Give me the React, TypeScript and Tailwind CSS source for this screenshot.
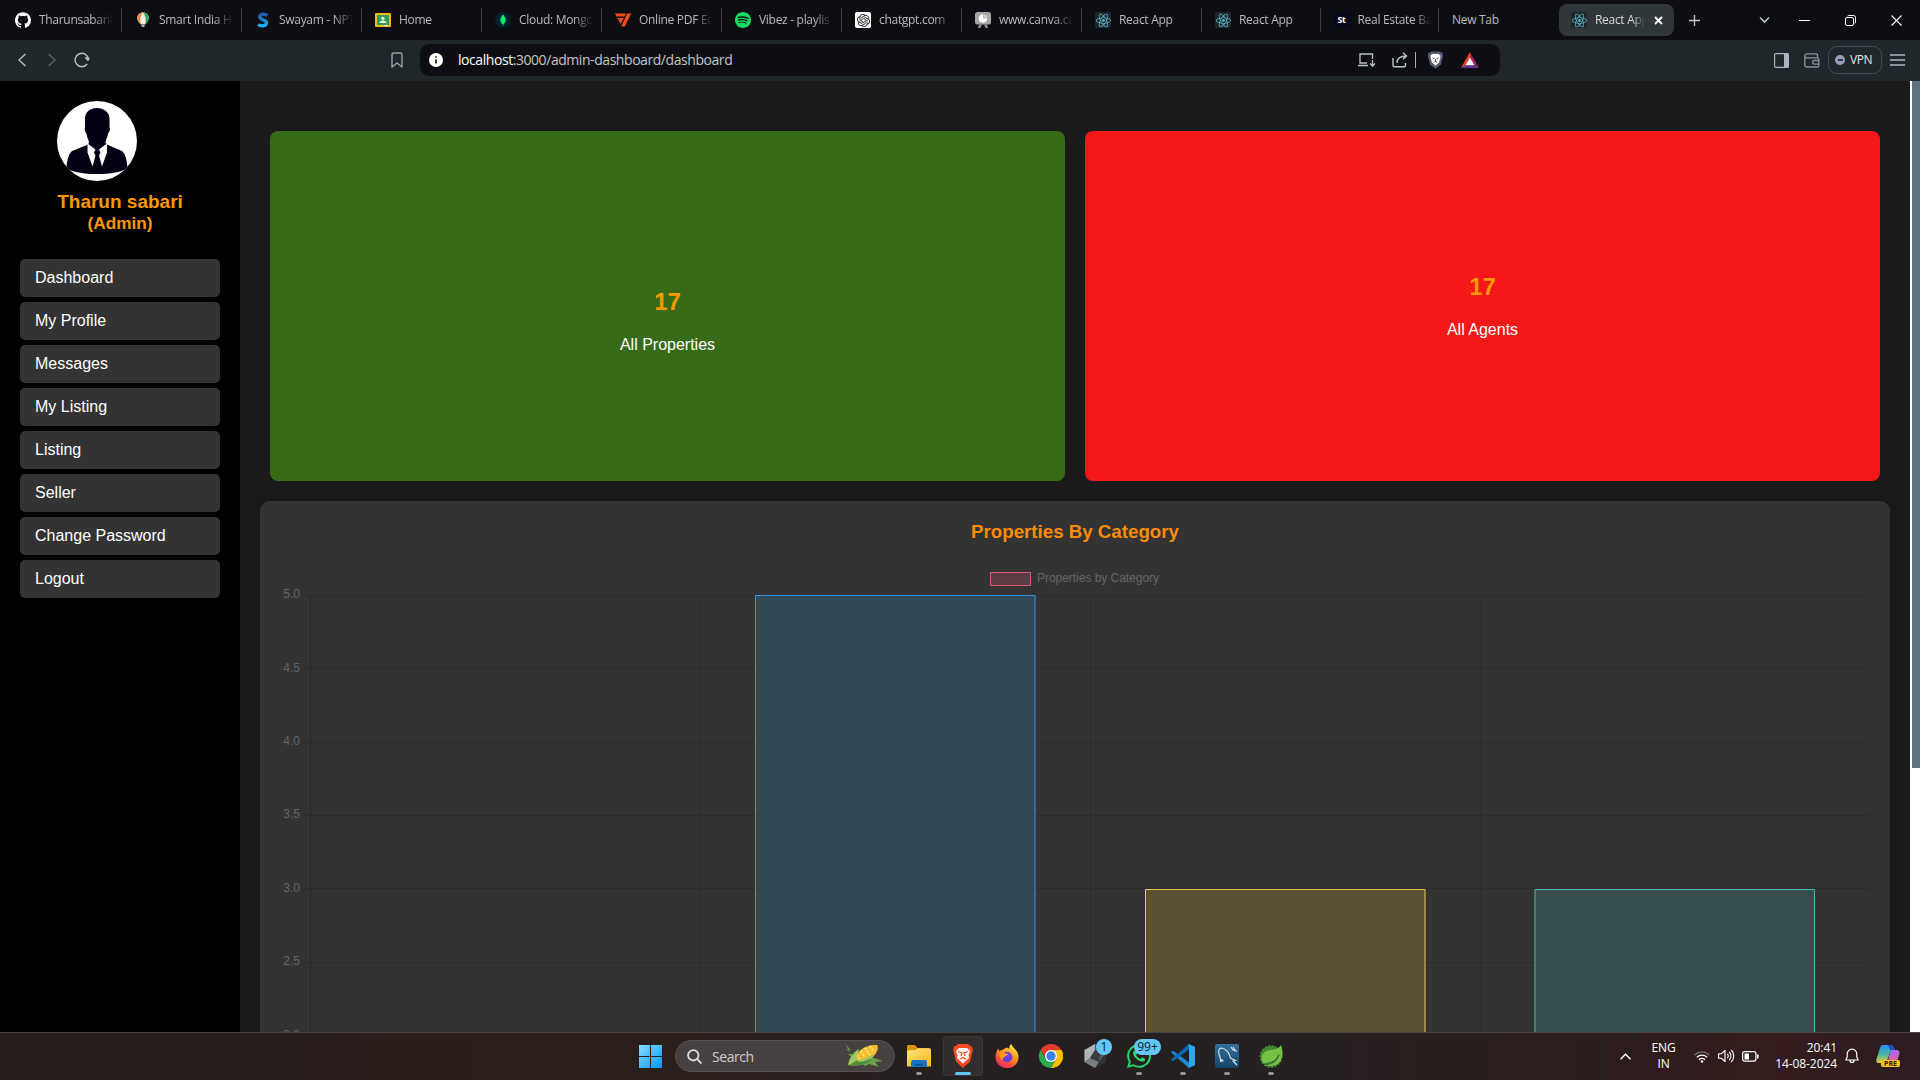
import React from 'react';
import { SiReact, SiGithub, SiSpotify, SiWhatsapp, SiOpenai } from 'react-icons/si';

const ui = "font-['Open_Sans',sans-serif]";

function ReactIcon() {
  return (
    <span className="flex size-4 items-center justify-center rounded-[2px] bg-[#23272b] text-[#53b9d1]">
      <SiReact size={15} />
    </span>
  );
}

function BalloonIcon() {
  return (
    <svg width="16" height="16" viewBox="0 0 16 16">
      <path d="M8 .5C4.500.5 2.200 3 2.200 6c0 2.600 2 4.800 3.800 6.500h4c1.800-1.700 3.800-3.900 3.800-6.500 0-3-2.300-5.500-5.800-5.500z" fill="#f4efe6" />
      <path d="M8 .5C4.500.5 2.200 3 2.200 6c0 2.600 2 4.800 3.800 6.500C4.800 9 5 3.500 8 .5z" fill="#f08a4b" />
      <path d="M8 .5c3.500 0 5.800 2.500 5.800 5.500 0 2.600-2 4.800-3.800 6.500C11.200 9 11 3.500 8 .5z" fill="#3fa45b" />
      <path d="M6.500 13h3v2h-3z" fill="#b9b09c" />
    </svg>
  );
}

function SwayamIcon() {
  return (
    <svg width="16" height="16" viewBox="0 0 16 16">
      <defs>
        <linearGradient id="sw" x1="0" y1="0" x2="0" y2="1">
          <stop offset="0" stopColor="#2458a8" />
          <stop offset="1" stopColor="#18b2f2" />
        </linearGradient>
      </defs>
      <path d="M12.300 3.600C11 2 5 1.200 4.800 4.900c-.1 3.400 7 2.400 6.700 6-.4 4-6.600 3.300-8.200 1.300" fill="none" stroke="url(#sw)" strokeWidth="3.400" />
    </svg>
  );
}

function ClassroomIcon() {
  return (
    <svg width="16" height="16" viewBox="0 0 16 16">
      <rect y="1" width="16" height="14" rx="1" fill="#f5ba15" />
      <rect x="2" y="3" width="12" height="10" fill="#2f9e58" />
      <circle cx="8" cy="6.300" r="1.600" fill="#fff" />
      <path d="M4.500 11c0-3.400 7-3.400 7 0z" fill="#fff" />
      <path d="M9 13h4v1H9z" fill="#fff3c4" />
    </svg>
  );
}

function MongoIcon() {
  return (
    <svg width="16" height="16" viewBox="0 0 16 16">
      <circle cx="8" cy="8" r="8" fill="#04202b" />
      <path d="M8 2.200c.5 1.400 2.700 2.700 2.700 5.800 0 2.500-1.600 3.600-2.300 4.300L8.200 14h-.4l-.2-1.700C6.900 11.600 5.300 10.500 5.300 8 5.300 4.900 7.500 3.600 8 2.200z" fill="#00ed64" />
    </svg>
  );
}

function PdfIcon() {
  return (
    <svg width="16" height="16" viewBox="0 0 16 16" fill="#f0501e">
      <path d="M0 1.500h11L9.600 4.400H1.600zM2.300 6h6.500l-3 6zM12.200 1.500H16L9.900 14.500H6.200z" />
    </svg>
  );
}

function CanvaIcon() {
  return (
    <svg width="16" height="16" viewBox="0 0 16 16">
      <rect x="0" y="0" width="16" height="12.500" rx="2.500" fill="#a5a5a5" />
      <path d="M4 12.500h3L5.500 16H3zM9 12.500h3L13 16h-2.500z" fill="#8f8f8f" />
      <circle cx="8" cy="6.500" r="4.300" fill="#fff" />
      <path d="M8.500 2v4H13A4.600 4.600 0 0 0 8.500 2z" fill="#cfcfcf" stroke="#a5a5a5" strokeWidth=".6" />
    </svg>
  );
}

function StIcon() {
  return (
    <span className="flex size-4 items-center justify-center rounded-[3px] bg-[#04091d] text-[9px] font-bold tracking-[-0.500px] text-white">
      St
    </span>
  );
}

const tabs: { title: string; icon: React.ReactNode }[] = [
  { title: 'Tharunsabari8', icon: <SiGithub size={16} className="text-white" /> },
  { title: 'Smart India H', icon: <BalloonIcon /> },
  { title: 'Swayam - NPT', icon: <SwayamIcon /> },
  { title: 'Home', icon: <ClassroomIcon /> },
  { title: 'Cloud: Mongo', icon: <MongoIcon /> },
  { title: 'Online PDF Ed', icon: <PdfIcon /> },
  { title: 'Vibez - playlis', icon: <SiSpotify size={16} className="text-[#1ed760]" /> },
  {
    title: 'chatgpt.com',
    icon: (
      <span className="flex size-4 items-center justify-center rounded-[2px] bg-white text-[#222]">
        <SiOpenai size={13} />
      </span>
    ),
  },
  { title: 'www.canva.co', icon: <CanvaIcon /> },
  { title: 'React App', icon: <ReactIcon /> },
  { title: 'React App', icon: <ReactIcon /> },
  { title: 'Real Estate Ba', icon: <StIcon /> },
];

const fade = '[mask-image:linear-gradient(to_right,black_74%,transparent_100%)]';

function TabStrip() {
  return (
    <div className="flex h-10 shrink-0 items-center bg-[#0d0e13] text-[12px] tracking-[-0.300px] text-[#b9babd]">
      <div className="flex w-[1439px] shrink-0 pl-[2px]">
        {tabs.map((t, i) => (
          <div key={i} className={`flex h-6 shrink-0 items-center border-r border-[#3b3c40] ${i > 9 ? 'w-[118.500px]' : 'w-[120px]'}`}>
            <span className="ml-[13px] size-4 shrink-0">{t.icon}</span>
            <span className={`ml-2 w-[74px] shrink-0 whitespace-nowrap ${fade}`}>{t.title}</span>
          </div>
        ))}
      </div>
      <div className="w-[120px] shrink-0 pl-[13px]">New Tab</div>
      <div className="flex h-8 w-[115px] shrink-0 items-center rounded-lg bg-[#2f373b] pl-3 text-[#d8dadc]">
        <ReactIcon />
        <span className={`ml-2 w-[50px] shrink-0 whitespace-nowrap ${fade}`}>React App</span>
        <svg className="ml-[9px]" width="9" height="9" viewBox="0 0 9 9" stroke="#fff" strokeWidth="1.800">
          <path d="M1 1l7 7M8 1L1 8" />
        </svg>
      </div>
      <svg className="ml-[15px]" width="11" height="11" viewBox="0 0 11 11" stroke="#c6c8ca" strokeWidth="1.300">
        <path d="M5.500 0v11M0 5.500h11" />
      </svg>
      <svg className="ml-[59px]" width="11" height="8" viewBox="0 0 11 8" fill="none" stroke="#b7c4cc" strokeWidth="1.600">
        <path d="M1 1.500l4.500 4.500L10 1.500" />
      </svg>
      <svg className="ml-[29px]" width="11" height="11" viewBox="0 0 11 11" stroke="#fff">
        <path d="M0 5.500h11" />
      </svg>
      <svg className="ml-[35px]" width="11" height="11" viewBox="0 0 11 11" fill="none" stroke="#fff">
        <rect x=".5" y="2.500" width="8" height="8" rx="1.500" />
        <path d="M2.500 1C3 .6 3.500.5 4 .5h4.500a2 2 0 0 1 2 2V7c0 .6-.1 1-.5 1.500" />
      </svg>
      <svg className="ml-[35px]" width="11" height="11" viewBox="0 0 11 11" stroke="#fff" strokeWidth="1.100">
        <path d="M.5.5l10 10M10.500.5l-10 10" />
      </svg>
    </div>
  );
}

function Toolbar() {
  return (
    <div className="flex h-[41px] shrink-0 items-center bg-[#20272b] pb-px">
      <svg className="ml-[17px]" width="10" height="14" viewBox="0 0 10 14" fill="none" stroke="#b3bdc4" strokeWidth="1.400">
        <path d="M8.500 1L2 7l6.500 6" />
      </svg>
      <svg className="ml-[20px]" width="10" height="14" viewBox="0 0 10 14" fill="none" stroke="#5b656b" strokeWidth="1.400">
        <path d="M1.500 1L8 7l-6.500 6" />
      </svg>
      <svg className="ml-[17px]" width="16" height="16" viewBox="0 0 16 16" fill="none" stroke="#b3bdc4" strokeWidth="1.400">
        <path d="M13.200 12A6.700 6.700 0 1 1 14.500 7.500" />
        <path d="M10.300 5.300h5v2.400l-1.500 1.500z" fill="#b3bdc4" stroke="none" />
      </svg>
      <svg className="ml-[301px]" width="12" height="16" viewBox="0 0 12 16" fill="none" stroke="#97a3ab" strokeWidth="1.400">
        <path d="M1 2.500C1 1.500 1.500 1 2.500 1h7c1 0 1.500.5 1.500 1.500V15l-5-4-5 4z" strokeLinejoin="round" />
      </svg>
      <div className="ml-[17px] flex h-8 w-[1080px] shrink-0 items-center rounded-[9px] bg-[#0d0e13]">
        <svg className="ml-[9px]" width="14" height="14" viewBox="0 0 14 14">
          <circle cx="7" cy="7" r="7" fill="#fff" />
          <path d="M7 6.200v4.300M7 3.300v1.500" stroke="#0d0e13" strokeWidth="1.600" />
        </svg>
        <div className="ml-[15px] w-[900px] text-[14px] leading-[18px] tracking-[-0.440px] text-[#c3c5c8]">
          <span className="text-white">localhost</span>:3000/admin-dashboard/dashboard
        </div>
        <svg width="17" height="14" viewBox="0 0 17 14" fill="none" stroke="#bfc3c7" strokeWidth="1.300">
          <path d="M14.500 6V1H2v9h7M0 12.500h10" />
          <path d="M14.500 7v6M12 10.500l2.500 2.500 2.500-2.500" />
        </svg>
        <svg className="ml-[17px]" width="16" height="16" viewBox="0 0 16 16" fill="none" stroke="#bfc3c7" strokeWidth="1.400">
          <path d="M1 6v7.500c0 .8.500 1.300 1.300 1.300h9.900c.8 0 1.300-.5 1.300-1.300V11" />
          <path d="M5 11c0-4.500 2.500-7 9.500-7M11 .8l3.500 3.200L11 7.300" />
        </svg>
        <div className="ml-[7px] h-4 w-px bg-[#a9adb1]" />
        <svg className="ml-[11px]" width="17" height="18" viewBox="0 0 17 18">
          <path d="M4 .5h9l1 1 1.500.3.5 3.200-2 8.500-5.500 4.300L3 13.500 1 5l.5-3.200L3 1.500z" fill="#5a5c73" />
          <path d="M5.500 3h6l2 1.500-.3 3-1.200 4-3.500 3-3.500-3-1.200-4-.3-3z" fill="#fff" />
          <path d="M5.500 7l2 .7M11.500 7l-2 .7M8.500 8v2.500M6.800 11l1.700-.6 1.700.6" fill="none" stroke="#4a4c60" strokeWidth="1" />
        </svg>
        <svg className="ml-[17px]" width="18" height="16" viewBox="0 0 18 16">
          <path d="M9 0L0 16l4.500-2.800L9 5.500z" fill="#ff4724" />
          <path d="M9 0l9 16-4.500-2.800L9 5.500z" fill="#9e1f63" />
          <path d="M0 16h18l-4.500-2.800h-9z" fill="#662d91" />
          <path d="M9 5.500l4.500 7.700h-9z" fill="#fff" />
        </svg>
      </div>
      <svg className="ml-[274px]" width="15" height="15" viewBox="0 0 15 15" fill="none" stroke="#a9b6bf" strokeWidth="1.200">
        <rect x=".6" y=".6" width="13.800" height="13.800" rx="1" />
        <path d="M10 1h4.500v13.500H10z" fill="#a9b6bf" stroke="none" />
      </svg>
      <svg className="ml-[15px]" width="16" height="15" viewBox="0 0 16 15" fill="none" stroke="#87939b" strokeWidth="1.300">
        <path d="M13.500 4V2.200c0-.8-.5-1.300-1.300-1.300H2.800a2 2 0 0 0 0 4h10.700c.8 0 1.300.5 1.300 1.300v6.200c0 1-.6 1.600-1.600 1.600H3a2.200 2.200 0 0 1-2.200-2.200V3" />
        <path d="M15 7.500h-4.500a1.700 1.700 0 0 0 0 3.600H15" />
      </svg>
      <div className="ml-2 flex h-[28px] w-[54px] shrink-0 items-center rounded-[9px] border border-[#414b51] pl-[6px] text-[12px] font-medium tracking-[-0.400px] text-[#e6e8ea]">
        <span className="mr-[5px] flex size-[10px] shrink-0 items-center justify-center rounded-full bg-[#9b9db5]">
          <span className="h-[2px] w-[5px] bg-[#31384a]" />
        </span>
        VPN
      </div>
      <svg className="ml-[8px]" width="15" height="12" viewBox="0 0 15 12" stroke="#a9b6bf" strokeWidth="1.300">
        <path d="M0 1h15M0 6h15M0 11h15" />
      </svg>
    </div>
  );
}

const menu = ['Dashboard', 'My Profile', 'Messages', 'My Listing', 'Listing', 'Seller', 'Change Password', 'Logout'];

function Sidebar() {
  return (
    <aside className="w-60 shrink-0 bg-black px-5 pt-5">
      <svg className="ml-[37px] block" width="80" height="80" viewBox="0 0 80 80">
        <clipPath id="av">
          <circle cx="40" cy="40" r="40" />
        </clipPath>
        <g clipPath="url(#av)">
          <rect width="80" height="80" fill="#fff" />
          <path d="M39.500 7C32 7 28 12 28 18v8c-1 2 0 5 1.500 6.500C30 37 32 39 32 42L30 44l-15 6C11 54 10 60 9.500 67 20 75 60 75 70.500 67 70 60 69 54 65 50l-14-6-2.500-2c0-3 2-5 2.500-9.500 1.500-1.500 2.500-4.500 1.500-6.500v-8C52.500 11 47 7 39.500 7z" fill="#030014" />
          <path d="M30.500 42.500l8 6-1.500 3 1.500 3-3 11-5-14zM50 42.500l-8 6 1.500 3-1.500 3 3 11 5-14z" fill="#fff" />
        </g>
      </svg>
      <h2 className="mt-[9px] text-center text-[19px] leading-[23px] font-bold text-[#ff9800]">Tharun sabari</h2>
      <h3 className="text-center text-[17.200px] leading-[21px] font-bold text-[#ff9800]">(Admin)</h3>
      <nav className="mt-[25px] flex flex-col gap-[5px]">
        {menu.map((m) => (
          <a key={m} className="rounded-[5px] bg-[#333] px-[15px] py-2.5 text-[16px] leading-[18px] text-white">
            {m}
          </a>
        ))}
      </nav>
    </aside>
  );
}

function Stat({ value, label, className }: { value: string; label: string; className: string }) {
  return (
    <div className={`flex h-[350px] flex-1 flex-col items-center rounded-[8px] ${className}`}>
      <div className="text-[24px] leading-[28px] font-bold text-[#ff9800]">{value}</div>
      <div className="mt-5 text-[16px] leading-[18px] text-white">{label}</div>
    </div>
  );
}

const ticks = ['5.0', '4.5', '4.0', '3.5', '3.0', '2.5', '2.0'];
const bars = [
  { x: 755, value: 5, fill: 'rgba(54,162,235,0.2)', stroke: 'rgb(54,162,235)' },
  { x: 1145, value: 3, fill: 'rgba(255,206,86,0.2)', stroke: 'rgb(255,206,86)' },
  { x: 1534.5, value: 3, fill: 'rgba(75,192,192,0.2)', stroke: 'rgb(75,192,192)' },
];

function Chart() {
  const step = 73.35;
  return (
    <svg className="block" width="1590" height="460" viewBox="280 565 1590 460" overflow="visible" fontSize="12" fill="#666">
      <rect x="990.500" y="572.500" width="40" height="13" fill="rgba(255,99,132,0.2)" stroke="rgb(255,99,132)" strokeOpacity=".8" />
      <text x="1037" y="582" textLength="122">
        Properties by Category
      </text>
      {ticks.map((t, i) => (
        <g key={t}>
          <path d={`M303 ${Math.round(595 + i * step) + 0.5}H1870`} stroke="rgba(0,0,0,0.1)" />
          <text x="300" y={Math.round(598.4 + i * step)} textAnchor="end">
            {t}
          </text>
        </g>
      ))}
      {[0, 1, 2, 3].map((i) => (
        <path key={i} d={`M${310.5 + i * 390} 595V1100`} stroke={i === 0 ? 'rgba(0,0,0,0.22)' : 'rgba(0,0,0,0.1)'} />
      ))}
      {bars.map((b) => {
        const y = Math.round(595 + (5 - b.value) * 2 * step) + (b.value === 3 ? 1 : 0);
        return (
          <g key={b.x}>
            <rect x={b.x} y={y} width="280.500" height="500" fill={b.fill} />
            <path d={`M${b.x + 0.5} 1100V${y + 0.5}H${b.x + 280}V1100`} fill="none" stroke={b.stroke} strokeOpacity=".9" />
          </g>
        );
      })}
    </svg>
  );
}

function Page() {
  return (
    <div className="flex h-[951px] shrink-0 overflow-hidden bg-[#1a1a1a] font-['Liberation_Sans',sans-serif]">
      <Sidebar />
      <main className="min-w-0 flex-1 px-5 pt-[50px]">
        <div className="flex gap-5 px-2.5">
          <Stat value="17" label="All Properties" className="bg-[#376b17] pt-[157px]" />
          <Stat value="17" label="All Agents" className="bg-[#f51818] pt-[142px]" />
        </div>
        <section className="mt-5 h-[800px] rounded-[10px] bg-[#333] px-5 pt-[19px] shadow-[0_0_10px_rgba(0,0,0,0.2)]">
          <h2 className="mb-[22px] text-center text-[18.720px] leading-[23px] font-bold text-[#ff8c00]">Properties By Category</h2>
          <Chart />
        </section>
      </main>
      <div className="h-full w-2.5 shrink-0 bg-white pl-0.5">
        <div className="h-[687px] bg-[#5d7380]" />
      </div>
    </div>
  );
}

function Corn() {
  return (
    <svg width="38" height="26" viewBox="0 0 38 26">
      <path d="M1 1l6 6-5-1 6 5-4 0 7 6-6 6 10-4 6 4 4-2 10 3-4-5 8-1-9-3-10-1L8 12z" fill="#6d9f4d" />
      <path d="M10 17C12 8 22 1 33 2c3 4-2 13-14 18z" fill="#f6bd27" />
      <path d="M13 12l3 4M17 8l4 6M21 5l5 7M26 3l4 6" stroke="#fbe58a" strokeWidth="2" strokeDasharray="2 1.500" />
      <path d="M4 22C5 16 9 9 15 6c-2 6-2 9-2 11 5 0 11-3 17-6-2 8-12 13-26 11z" fill="#9bc764" />
      <path d="M4 22c5-1 7-4 9-5-1 3 8 2 15-2-5 7-13 9-24 7z" fill="#548c35" />
    </svg>
  );
}

function TaskIcon({ children, mark, active }: { children: React.ReactNode; mark?: boolean; active?: boolean }) {
  return (
    <div className={`relative flex h-10 w-10 shrink-0 items-center justify-center rounded ${active ? 'bg-[#342d2d] ring-1 ring-[#3d3636] ring-inset' : ''}`}>
      {children}
      {active && <span className="absolute bottom-px h-[3px] w-4 rounded-full bg-[#5ec3f5]" />}
      {mark && <span className="absolute bottom-px h-[3px] w-1.5 rounded-full bg-[#999293]" />}
    </div>
  );
}

function Badge({ children, className }: { children: string; className: string }) {
  return (
    <span className={`absolute flex h-4 items-center justify-center rounded-full bg-[#62c8fa] text-[12px] leading-none text-[#10222c] ${className}`}>
      {children}
    </span>
  );
}

function Taskbar() {
  return (
    <div className="flex h-12 shrink-0 items-center border-t border-[#484241] bg-[linear-gradient(90deg,#241d1b_0%,#2c1e1a_33%,#251f20_48%,#241f20_66%,#2b1d1d_82%,#341c1c_93%,#2c1c21_100%)] pb-px">
      <svg className="ml-[639px] shrink-0" width="23" height="23" viewBox="0 0 23 23">
        <defs>
          <linearGradient id="win" x1="0" y1="0" x2="1" y2="1">
            <stop offset="0" stopColor="#84dcff" />
            <stop offset="1" stopColor="#0a95f8" />
          </linearGradient>
        </defs>
        <path d="M0 0h11v11H0zM12 0h11v11H12zM0 12h11v11H0zM12 12h11v11H12z" fill="url(#win)" />
      </svg>
      <div className="ml-[13px] flex h-8 w-[220px] shrink-0 items-center rounded-full border border-[#585051] bg-[#474041]">
        <svg className="ml-[11px]" width="15" height="15" viewBox="0 0 15 15" fill="none" stroke="#dedcdc" strokeWidth="1.800">
          <circle cx="6.300" cy="6.300" r="5.200" />
          <path d="M10.200 10.200l4.300 4.300" />
        </svg>
        <span className="ml-[10px] w-[132px] text-[14px] tracking-[-0.450px] text-[#cfcccc]">Search</span>
        <Corn />
      </div>
      <div className="ml-1 flex gap-1">
        <TaskIcon mark>
          <svg width="24" height="22" viewBox="0 0 24 22">
            <defs>
              <linearGradient id="fo" x1="0" y1="0" x2="1" y2="1">
                <stop offset="0" stopColor="#ffe07a" />
                <stop offset="1" stopColor="#f8b91d" />
              </linearGradient>
            </defs>
            <path d="M0 1.500C0 .7.700 0 1.500 0H8l2.500 3H22v6H0z" fill="#d99400" />
            <path d="M0 5.500L8.500 5l2.200-1.800H22.500c.8 0 1.500.7 1.500 1.500V21.500H0z" fill="url(#fo)" />
            <path d="M4 22v-4.500C4 15.500 5 15 6.500 15h11c1.500 0 2.500.5 2.500 2.500V22z" fill="#1673c4" />
            <path d="M8 19h8v1.500H8z" fill="#0a4f93" />
          </svg>
        </TaskIcon>
        <TaskIcon active>
          <svg width="20" height="24" viewBox="0 0 20 24">
            <path d="M5 0h10l2 2h1.500L20 6l-.7 2-2.300 9.500L10 24l-7-6.500L.7 8 0 6l1.500-4H3z" fill="#fb4a1d" />
            <path d="M6 4h8l3 3-1.500 4 .5 3-6 5.500L4 14l.5-3L3 7z" fill="#fff" />
            <path d="M5 7.500l4 1.500-1 3M15 7.500L11 9l1 3M7 15l3-1.500 3 1.500" fill="none" stroke="#fb4a1d" strokeWidth="1.300" />
          </svg>
        </TaskIcon>
        <TaskIcon>
          <svg width="24" height="24" viewBox="0 0 24 24">
            <defs>
              <linearGradient id="ff" x1=".8" y1="0" x2=".2" y2="1">
                <stop offset="0" stopColor="#fff44f" />
                <stop offset=".4" stopColor="#ff9a1f" />
                <stop offset=".75" stopColor="#ff4a3d" />
                <stop offset="1" stopColor="#e5227c" />
              </linearGradient>
            </defs>
            <path d="M12 24C5 24 .5 19 .5 13c0-3.500 1.300-6 2.500-8.500L4.500 7C6.500 5.500 8 6 9 5c2-2 4-1 5.500 0C14 3 14.500 1 16.500 0c.5 4 7 6 7 13 0 6.500-5 11-11.500 11z" fill="url(#ff)" />
            <circle cx="12" cy="13" r="5.300" fill="#6a3fd6" />
            <path d="M4 8c3-1 5 0 6.500 1.500l3 .2c-.5 2-3 1.500-3.500 3-1.500 0-3 2-2 4C5 15 4 11 4 8z" fill="#ff9a1f" />
          </svg>
        </TaskIcon>
        <TaskIcon>
          <svg width="24" height="24" viewBox="0 0 24 24">
            <path d="M12 6h10.400A12 12 0 0 1 12 24l5.200-9z" fill="#fdbd00" />
            <path d="M1.600 6A12 12 0 0 0 12 24l5.200-9H6.800z" fill="#2da94f" />
            <path d="M12 24l5.200-9 2-6 3.200-3A12 12 0 0 1 12 24z" fill="#fdbd00" />
            <path d="M22.400 6A12 12 0 0 0 1.600 6l5.200 9L12 6z" fill="#e33b2e" />
            <circle cx="12" cy="12" r="6" fill="#fff" />
            <circle cx="12" cy="12" r="4.700" fill="#3b82f0" />
          </svg>
        </TaskIcon>
        <TaskIcon>
          <svg width="22" height="24" viewBox="0 0 22 24">
            <path d="M11 0l10.500 6v12L11 24 .5 18V6z" fill="#55585c" />
            <path d="M11 0v6L6 14 .5 18V6z" fill="#aeb2b6" />
            <path d="M.5 18L6 14l9 4-4 6z" fill="#7b7f83" />
            <path d="M15 18l6.500-8v8L11 24z" fill="#2e3033" />
            <path d="M6 14l5-8 5 3-1 9z" fill="#3b3d41" />
          </svg>
          <Badge className="top-[3px] right-[3px] w-4">1</Badge>
        </TaskIcon>
        <TaskIcon mark>
          <SiWhatsapp size={24} className="text-[#25d366]" />
          <Badge className="top-[3px] left-[15px] w-[27px]">99+</Badge>
        </TaskIcon>
        <TaskIcon mark>
          <svg width="24" height="24" viewBox="0 0 24 24">
            <path d="M0 8.500L2.200 6.700 18 18.500V24z" fill="#1c8ad6" />
            <path d="M0 15.500l2.200 1.800L18 5.500V0z" fill="#0b68b0" />
            <path d="M17.500 0L24 2.800v18.400L17.500 24l-1-1.500c1 .5 1.500 0 1.500-1V2.500c0-1-.5-1.500-1.500-1z" fill="#30a5f2" />
          </svg>
        </TaskIcon>
        <TaskIcon mark>
          <svg width="24" height="24" viewBox="0 0 24 24">
            <defs>
              <linearGradient id="my" x1="0" y1="0" x2="0" y2="1">
                <stop offset="0" stopColor="#346f9b" />
                <stop offset="1" stopColor="#174466" />
              </linearGradient>
            </defs>
            <rect width="24" height="24" rx="2" fill="url(#my)" />
            <path d="M6 18c-1-3-.5-5-2-8-1-3 0-6 2.500-6 5 1 8 6 9 10l5 2.500-2.500.5 4 4M6 18l1-2.500 1.500 2M16 3l2 3 4 1M18 3l3 5" fill="none" stroke="#dbe9f3" strokeWidth="1.100" />
          </svg>
        </TaskIcon>
        <TaskIcon mark>
          <svg width="24" height="24" viewBox="0 0 24 24">
            <circle cx="12" cy="12.500" r="10.600" fill="#3d8a35" stroke="#3d8a35" strokeWidth="1.800" strokeDasharray="2 1.600" />
            <path d="M22 1c1.500 4 2.500 10 0 15-3 6-10 7-17 5 6-1 12-3 14-9-3 5-9 7-15 7-3-5-1-11 5-12.500C14 5 19 6 22 1z" fill="#77c043" />
            <path d="M5 20.500c7 0 13-3 15-10" fill="none" stroke="#2a6b2a" strokeWidth="1.200" />
          </svg>
        </TaskIcon>
      </div>
      <svg className="ml-[329px] shrink-0" width="11" height="7" viewBox="0 0 11 7" fill="none" stroke="#fff" strokeWidth="1.400">
        <path d="M.5 6.300l5-5 5 5" />
      </svg>
      <div className="ml-[19px] w-[27px] shrink-0 text-center text-[12px] leading-4 tracking-[-0.200px] text-white">
        <div>ENG</div>
        <div>IN</div>
      </div>
      <svg className="ml-[17px] shrink-0" width="16" height="13" viewBox="0 0 16 13" fill="none" stroke="#fff" strokeWidth="1.300">
        <path d="M.7 5a10 10 0 0 1 14.600 0" stroke="#7d6b6b" />
        <path d="M2.800 7.400a7.200 7.200 0 0 1 10.400 0M5 9.700a4.200 4.200 0 0 1 6 0" />
        <circle cx="8" cy="11.500" r="1.200" fill="#fff" stroke="none" />
      </svg>
      <svg className="ml-2 shrink-0" width="17" height="14" viewBox="0 0 17 14" fill="none" stroke="#fff" strokeWidth="1.100">
        <path d="M.6 4.800v4.400h2.600L7 12.500v-11L3.200 4.800z" strokeLinejoin="round" />
        <path d="M9.300 4.800a3 3 0 0 1 0 4.400M11.200 3a5.500 5.500 0 0 1 0 8M13.300 1a8.500 8.500 0 0 1 0 12" />
      </svg>
      <svg className="ml-[7px] shrink-0" width="17" height="11" viewBox="0 0 17 11" fill="none" stroke="#fff" strokeWidth="1.200">
        <rect x=".6" y=".6" width="13.300" height="9.500" rx="2" />
        <path d="M2.500 2.500h4.500v6H2.500z" fill="#fff" stroke="none" />
        <path d="M15.800 3.500v4" strokeWidth="1.600" />
      </svg>
      <div className="w-[78px] shrink-0 text-right text-[12px] leading-4 tracking-[-0.080px] text-white">
        <div>20:41</div>
        <div>14-08-2024</div>
      </div>
      <svg className="ml-[8px] shrink-0" width="14" height="16" viewBox="0 0 14 16" fill="none" stroke="#fff" strokeWidth="1.200">
        <path d="M.8 12h12.400l-1.400-3V6A4.800 4.800 0 0 0 2.200 6v3zM5 12.500a2 2 0 0 0 4 0" strokeLinejoin="round" />
      </svg>
      <span className="relative ml-[17px] size-6 shrink-0">
        <svg width="24" height="24" viewBox="0 0 24 24">
          <defs>
            <linearGradient id="c1" x1="0" y1="0" x2="0" y2="1">
              <stop offset="0" stopColor="#2b8df0" />
              <stop offset=".5" stopColor="#3fb7a5" />
              <stop offset="1" stopColor="#e9c92c" />
            </linearGradient>
            <linearGradient id="c2" x1="0" y1="0" x2="0" y2="1">
              <stop offset="0" stopColor="#a66bf0" />
              <stop offset="1" stopColor="#f0608a" />
            </linearGradient>
          </defs>
          <path d="M7 1h8c2 0 2.500 1.500 3 3l1 2h-4l-4 11c-.5 1.500-1.500 2-3 2H3c-3 0-3-2-2.500-4L4 4c.6-2 1.500-3 3-3z" fill="url(#c1)" />
          <path d="M15 6h5c3 0 4 2 3.300 4L21 18c-.6 1.500-1.500 2-3 2h-7l3-11c.2-1 .5-2 1-3z" fill="url(#c2)" />
          <path d="M12 1h3c2 0 2.500 1.500 3 3l1 2h-5z" fill="#1a4fc0" />
        </svg>
        <span className="absolute top-[16px] left-[5px] flex h-[7px] w-[19px] items-center justify-center rounded-[2px] bg-[#fcc419] text-[7px] leading-none font-bold text-[#241a05]">
          PRE
        </span>
      </span>
    </div>
  );
}

export default function App() {
  return (
    <div className={`flex h-[1080px] w-[1920px] flex-col overflow-hidden bg-black ${ui}`}>
      <TabStrip />
      <Toolbar />
      <Page />
      <Taskbar />
    </div>
  );
}
